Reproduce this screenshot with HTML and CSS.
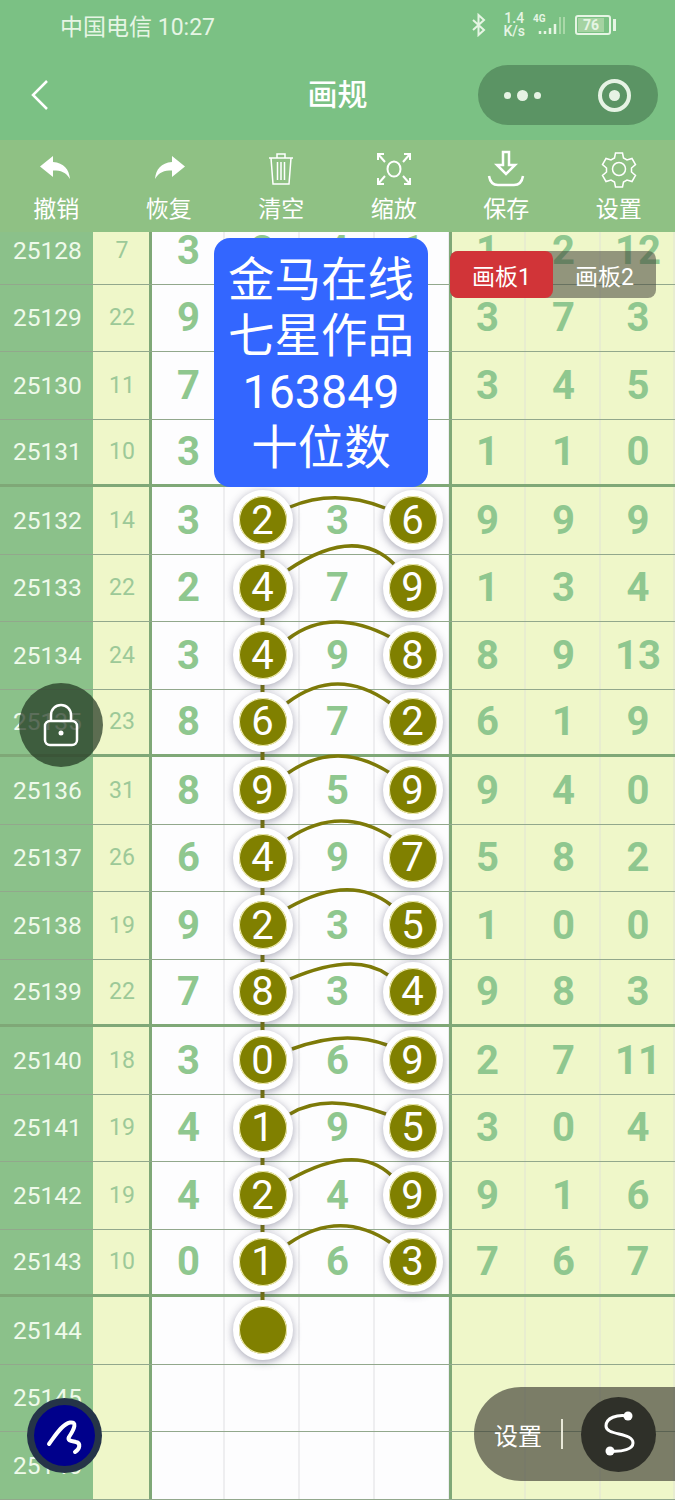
FILE: index.html
```html
<!DOCTYPE html>
<html>
<head>
<meta charset="utf-8">
<title>画规</title>
<link rel="stylesheet" href="styles.css">
</head>
<body>
<div class="top">
  <div class="status">
    <span class="carrier">中国电信 10:27</span>
    <div class="status-icons">
      <svg class="bt" width="18" height="24" viewBox="0 0 18 24"><path d="M3 7l11 10-5.5 5V2L14 7 3 17" fill="none" stroke="#e6f5e4" stroke-width="2"/></svg>
      <span class="speed">1.4<br>K/s</span>
      <div class="signal">
        <span class="net">4G</span>
        <svg width="32" height="24" viewBox="0 0 32 24"><path d="M5 18v3M10 18v3M15 15v6M20 11v10" stroke="#e6f5e4" stroke-width="2.5"/><path d="M25 4v17M29 4v17" stroke="#a9d8a8" stroke-width="2"/></svg>
      </div>
      <div class="battery"><span class="level">76</span></div>
      <span class="battery-cap"></span>
    </div>
  </div>
  <div class="nav">
    <svg class="back" width="20" height="32" viewBox="0 0 20 32"><path d="M17 2L3 16l14 14" fill="none" stroke="#fff" stroke-width="2.5"/></svg>
    <span class="title">画规</span>
    <div class="capsule">
      <div class="dots"><i></i><i class="big"></i><i></i></div>
      <div class="target"><i></i></div>
    </div>
  </div>
</div>

<div class="toolbar">
  <div class="tool">
    <svg width="36" height="36" viewBox="0 0 36 36"><path d="M15 5L2 15.5 15 26v-6.5c8 0 13 1.5 17 8.5-1-10-6-16-17-17z" fill="#fff"/></svg>
    <span>撤销</span>
  </div>
  <div class="tool">
    <svg width="36" height="36" viewBox="0 0 36 36"><path d="M21 5l13 10.5L21 26v-6.5c-8 0-13 1.5-17 8.5 1-10 6-16 17-17z" fill="#fff"/></svg>
    <span>恢复</span>
  </div>
  <div class="tool">
    <svg width="36" height="36" viewBox="0 0 36 36" fill="none" stroke="#fff" stroke-width="1.5"><path d="M6 7h24M14 7V3h8v4M8 7l2 26h16l2-26M14.5 11v18M18 11v18M21.5 11v18"/></svg>
    <span>清空</span>
  </div>
  <div class="tool">
    <svg width="36" height="36" viewBox="0 0 36 36" fill="none" stroke="#fff" stroke-width="2"><ellipse cx="18" cy="18" rx="6.5" ry="7.5"/><path d="M8 3H2v6M2 3l7 8M28 3h6v6M34 3l-7 8M8 33H2v-6M2 33l7-8M28 33h6v-6M34 33l-7-8"/></svg>
    <span>缩放</span>
  </div>
  <div class="tool">
    <svg width="40" height="38" viewBox="0 0 40 38" fill="none" stroke="#fff" stroke-width="2.5"><path d="M17 2h6v13h6L20 24l-9-9h6zM3 26c1 6 4 9 9 9h16c5 0 8-3 9-9"/></svg>
    <span>保存</span>
  </div>
  <div class="tool">
    <svg width="36" height="36" viewBox="0 0 36 36" fill="none" stroke="#fff" stroke-width="1.5"><path d="M14.5 2h7l1 5 3.5 2 5-1.5 3.5 6-4 3.5v4l4 3.5-3.5 6-5-1.5-3.5 2-1 5h-7l-1-5-3.5-2-5 1.5-3.500-6 4-3.500v-4l-4-3.500 3.500-6 5 1.500 3.500-2z"/><circle cx="18" cy="18" r="6.5"/></svg>
    <span>设置</span>
  </div>
</div>

<div class="board">
  <div class="rows">
    <div class="row"><div class="no">25128</div><div class="sum">7</div><div class="d">3</div><div class="d">3</div><div class="d">4</div><div class="d">1</div><div class="d r first">1</div><div class="d r">2</div><div class="d r">12</div></div>
    <div class="row"><div class="no">25129</div><div class="sum">22</div><div class="d">9</div><div class="d"></div><div class="d"></div><div class="d"></div><div class="d r first">3</div><div class="d r">7</div><div class="d r">3</div></div>
    <div class="row"><div class="no">25130</div><div class="sum">11</div><div class="d">7</div><div class="d"></div><div class="d"></div><div class="d"></div><div class="d r first">3</div><div class="d r">4</div><div class="d r">5</div></div>
    <div class="row thick"><div class="no">25131</div><div class="sum">10</div><div class="d">3</div><div class="d"></div><div class="d"></div><div class="d"></div><div class="d r first">1</div><div class="d r">1</div><div class="d r">0</div></div>
    <div class="row"><div class="no">25132</div><div class="sum">14</div><div class="d">3</div><div class="d"><span class="ball">2</span></div><div class="d">3</div><div class="d"><span class="ball">6</span></div><div class="d r first">9</div><div class="d r">9</div><div class="d r">9</div></div>
    <div class="row"><div class="no">25133</div><div class="sum">22</div><div class="d">2</div><div class="d"><span class="ball">4</span></div><div class="d">7</div><div class="d"><span class="ball">9</span></div><div class="d r first">1</div><div class="d r">3</div><div class="d r">4</div></div>
    <div class="row"><div class="no">25134</div><div class="sum">24</div><div class="d">3</div><div class="d"><span class="ball">4</span></div><div class="d">9</div><div class="d"><span class="ball">8</span></div><div class="d r first">8</div><div class="d r">9</div><div class="d r">13</div></div>
    <div class="row thick"><div class="no">25135</div><div class="sum">23</div><div class="d">8</div><div class="d"><span class="ball">6</span></div><div class="d">7</div><div class="d"><span class="ball">2</span></div><div class="d r first">6</div><div class="d r">1</div><div class="d r">9</div></div>
    <div class="row"><div class="no">25136</div><div class="sum">31</div><div class="d">8</div><div class="d"><span class="ball">9</span></div><div class="d">5</div><div class="d"><span class="ball">9</span></div><div class="d r first">9</div><div class="d r">4</div><div class="d r">0</div></div>
    <div class="row"><div class="no">25137</div><div class="sum">26</div><div class="d">6</div><div class="d"><span class="ball">4</span></div><div class="d">9</div><div class="d"><span class="ball">7</span></div><div class="d r first">5</div><div class="d r">8</div><div class="d r">2</div></div>
    <div class="row"><div class="no">25138</div><div class="sum">19</div><div class="d">9</div><div class="d"><span class="ball">2</span></div><div class="d">3</div><div class="d"><span class="ball">5</span></div><div class="d r first">1</div><div class="d r">0</div><div class="d r">0</div></div>
    <div class="row thick"><div class="no">25139</div><div class="sum">22</div><div class="d">7</div><div class="d"><span class="ball">8</span></div><div class="d">3</div><div class="d"><span class="ball">4</span></div><div class="d r first">9</div><div class="d r">8</div><div class="d r">3</div></div>
    <div class="row"><div class="no">25140</div><div class="sum">18</div><div class="d">3</div><div class="d"><span class="ball">0</span></div><div class="d">6</div><div class="d"><span class="ball">9</span></div><div class="d r first">2</div><div class="d r">7</div><div class="d r">11</div></div>
    <div class="row"><div class="no">25141</div><div class="sum">19</div><div class="d">4</div><div class="d"><span class="ball">1</span></div><div class="d">9</div><div class="d"><span class="ball">5</span></div><div class="d r first">3</div><div class="d r">0</div><div class="d r">4</div></div>
    <div class="row"><div class="no">25142</div><div class="sum">19</div><div class="d">4</div><div class="d"><span class="ball">2</span></div><div class="d">4</div><div class="d"><span class="ball">9</span></div><div class="d r first">9</div><div class="d r">1</div><div class="d r">6</div></div>
    <div class="row thick"><div class="no">25143</div><div class="sum">10</div><div class="d">0</div><div class="d"><span class="ball">1</span></div><div class="d">6</div><div class="d"><span class="ball">3</span></div><div class="d r first">7</div><div class="d r">6</div><div class="d r">7</div></div>
    <div class="row"><div class="no">25144</div><div class="sum"></div><div class="d"></div><div class="d"><span class="ball"></span></div><div class="d"></div><div class="d"></div><div class="d r first"></div><div class="d r"></div><div class="d r"></div></div>
    <div class="row"><div class="no">25145</div><div class="sum"></div><div class="d"></div><div class="d"></div><div class="d"></div><div class="d"></div><div class="d r first"></div><div class="d r"></div><div class="d r"></div></div>
    <div class="row"><div class="no">25146</div><div class="sum"></div><div class="d"></div><div class="d"></div><div class="d"></div><div class="d"></div><div class="d r first"></div><div class="d r"></div><div class="d r"></div></div>
  </div>

  <!-- lines over the grid, board coordinates (page y minus 232) -->
  <svg class="lines" width="675" height="1268" viewBox="0 0 675 1268" fill="none" stroke="#7d7a08" stroke-width="3.5">
    <path d="M262.5 290V1100" stroke-width="4"/>
    <path d="M290 275Q335 256 385 276"/>
    <path d="M288 338Q355 293 394 332"/>
    <path d="M288 407Q331 374 390 405"/>
    <path d="M287 471Q337 433 390 471"/>
    <path d="M288 541Q337 507 390 541"/>
    <path d="M288 607Q340 572 391 605"/>
    <path d="M288 676Q350 641 391 673"/>
    <path d="M290 747Q355 719 388 743"/>
    <path d="M292 817Q345 797 387 813"/>
    <path d="M290 882Q326 860 386 882"/>
    <path d="M289 948Q356 910 391 943"/>
    <path d="M288 1012Q340 976 391 1011"/>
  </svg>

  <div class="note">金马在线<br>七星作品<br>163849<br>十位数</div>

  <div class="tabs">
    <span class="tab on">画板1</span>
    <span class="tab">画板2</span>
  </div>

  <div class="lock">
    <svg width="36" height="44" viewBox="0 0 36 44" fill="none" stroke="#fff" stroke-width="2.5"><rect x="2" y="18" width="32" height="24" rx="5"/><path d="M8 18v-6a10 10 0 0 1 20 0v6"/><circle cx="18" cy="30" r="2.5" fill="#fff" stroke="none"/></svg>
  </div>

  <div class="pen">
    <svg width="40" height="40" viewBox="0 0 40 40" fill="none" stroke="#fff" stroke-width="4" stroke-linecap="round" stroke-linejoin="round"><path d="M4 28C10 20 17 8 25 6.5 32 5.500 30 12 24 21 22 25 27 25 31 26 36 27 35 33 30 36"/></svg>
  </div>

  <div class="fab">
    <span class="fab-label">设置</span>
    <span class="fab-sep"></span>
    <div class="fab-btn">
      <svg width="40" height="48" viewBox="0 0 40 48" fill="none" stroke="#fff" stroke-width="3"><path d="M29 6C18 4 7 8 7 16c0 10 27 6 27 17 0 6-10 9-23 8"/><circle cx="29" cy="6" r="4.5" fill="#fff" stroke="none"/><circle cx="11" cy="41" r="4.5" fill="#fff" stroke="none"/></svg>
    </div>
  </div>
</div>
</body>
</html>
```
FILE: styles.css
```css
* {
  box-sizing: border-box;
}
html, body {
  margin: 0;
  padding: 0;
}
body {
  width: 675px;
  height: 1500px;
  overflow: hidden;
  font-family: "Roboto", "Noto Sans CJK SC", sans-serif;
  background: #fff;
}

/* status bar + title */
.top {
  height: 140px;
  background: #7bc184;
  color: #fff;
}
.status {
  height: 50px;
  padding: 0 59px 0 60px;
  display: flex;
  align-items: center;
  justify-content: space-between;
}
.carrier {
  font-size: 23px;
  color: #e6f5e4;
}
.status-icons {
  display: flex;
  align-items: center;
  gap: 8px;
  color: #e6f5e4;
}
.bt {
  margin-right: 7px;
}
.speed {
  font-size: 14px;
  line-height: 13px;
  text-align: center;
  font-weight: 500;
}
.signal {
  display: flex;
  position: relative;
  width: 34px;
  justify-content: flex-end;
}
.net {
  position: absolute;
  left: 0;
  top: 0;
  font-size: 10px;
  font-weight: 700;
}
.battery {
  width: 36px;
  height: 20px;
  border: 2px solid #e6f5e4;
  border-radius: 3px;
  padding: 1px;
  display: flex;
}
.level {
  width: 26px;
  background: #a5d3a2;
  font-size: 14px;
  line-height: 14px;
  text-align: center;
  font-weight: 700;
}
.battery-cap {
  width: 3px;
  height: 12px;
  margin-left: -6px;
  background: #e6f5e4;
}
.nav {
  height: 90px;
  padding: 0 17px 0 30px;
  display: flex;
  align-items: center;
  justify-content: space-between;
  position: relative;
}
.title {
  position: absolute;
  left: 0;
  right: 0;
  top: 24px;
  text-align: center;
  font-size: 30px;
  line-height: 42px;
  font-weight: 500;
}
.capsule {
  width: 180px;
  height: 60px;
  border-radius: 30px;
  background: #5b9464;
  display: flex;
  align-items: center;
  justify-content: space-between;
  padding: 0 27px 0 26px;
}
.dots {
  display: flex;
  align-items: center;
  gap: 6px;
}
.dots i {
  width: 7px;
  height: 7px;
  border-radius: 50%;
  background: #e6f3e4;
}
.dots i.big {
  width: 11px;
  height: 11px;
}
.target {
  width: 33px;
  height: 33px;
  border: 4px solid #e6f3e4;
  border-radius: 50%;
  display: flex;
  align-items: center;
  justify-content: center;
}
.target i {
  width: 11px;
  height: 11px;
  border-radius: 50%;
  background: #e6f3e4;
}

/* toolbar */
.toolbar {
  height: 92px;
  background: #8fc184;
  display: flex;
  padding: 10px 0 0;
}
.tool {
  width: 112.5px;
  display: flex;
  flex-direction: column;
  align-items: center;
  color: #fff;
  font-size: 23px;
}
.tool svg {
  height: 38px;
  display: block;
}
.tool span {
  line-height: 34px;
  margin-top: 5px;
}

/* the board */
.board {
  position: relative;
  height: 1268px;
  overflow: hidden;
  background: #fff;
}
.rows {
  margin-top: -15px;
}
.row {
  display: grid;
  grid-template-columns: 93px 59px 73px 75px 75px 75px 76px 75px 74px;
  height: 67.5px;
  border-bottom: 1px solid #92a88c;
}
.row.thick {
  border-bottom: 3px solid #7fa877;
}
.no {
  background: #8bc18a;
  color: #effaea;
  font-size: 24.5px;
  display: flex;
  align-items: center;
  padding-left: 13px;
}
.sum {
  background: #eff7c9;
  color: #9dc998;
  font-size: 23px;
  display: flex;
  align-items: center;
  justify-content: center;
  border-right: 3px solid #7fa877;
  padding-left: 2px;
}
.d {
  display: flex;
  align-items: center;
  justify-content: center;
  color: #8fc78f;
  font-size: 40px;
  font-weight: 700;
  background: #fdfdfe;
  box-shadow: inset -2px 0 #eeeef0;
}
.d.r {
  background: #eff7c9;
  box-shadow: inset -2px 0 #e8edcf;
}
.d.r.first {
  margin-left: -1px;
  border-left: 3px solid #7fa877;
  padding-right: 3px;
}
.ball {
  width: 60px;
  height: 60px;
  flex: none;
  border-radius: 50%;
  background: #808000;
  border: 6px solid #fff;
  box-shadow: 0 2px 8px rgba(60, 60, 90, .45), inset 0 0 0 1px #f3efb0;
  color: #fff;
  font-size: 40px;
  font-weight: 400;
  display: flex;
  align-items: center;
  justify-content: center;
  position: relative;
  z-index: 2;
}
.lines {
  position: absolute;
  left: 0;
  top: 0;
  z-index: 1;
}

/* floating things */
.note {
  position: absolute;
  left: 214px;
  top: 6px;
  width: 214px;
  height: 249px;
  z-index: 3;
  background: #3366ff;
  border-radius: 16px;
  color: #fff;
  font-size: 46.5px;
  line-height: 56px;
  text-align: center;
  padding-top: 14px;
}
.tabs {
  position: absolute;
  left: 450px;
  top: 19px;
  width: 206px;
  height: 47px;
  z-index: 3;
  display: flex;
  border-radius: 8px;
  background: rgba(70, 70, 60, .55);
  color: #fff;
  font-size: 23px;
}
.tab {
  flex: 1;
  display: flex;
  align-items: center;
  justify-content: center;
  border-radius: 8px;
}
.tab.on {
  background: #d13438;
}
.lock {
  position: absolute;
  left: 19px;
  top: 451px;
  width: 84px;
  height: 84px;
  z-index: 3;
  border-radius: 50%;
  background: rgba(30, 50, 30, .7);
  display: flex;
  align-items: center;
  justify-content: center;
}
.pen {
  position: absolute;
  left: 27px;
  top: 1166px;
  width: 75px;
  height: 75px;
  z-index: 3;
  border-radius: 50%;
  background: #00008b;
  border: 7px solid rgba(50, 70, 50, .75);
  display: flex;
  align-items: center;
  justify-content: center;
}
.fab {
  position: absolute;
  left: 474px;
  top: 1155px;
  width: 201px;
  height: 94px;
  z-index: 3;
  border-radius: 47px 0 0 47px;
  background: rgba(60, 60, 50, .65);
  display: flex;
  align-items: center;
  color: #fff;
  font-size: 24px;
  padding-left: 20px;
}
.fab-sep {
  width: 2px;
  height: 30px;
  background: #e8e8d8;
  margin-left: 19px;
}
.fab-btn {
  width: 75px;
  height: 75px;
  margin-left: 18px;
  border-radius: 50%;
  background: #2f3029;
  display: flex;
  align-items: center;
  justify-content: center;
}
```
